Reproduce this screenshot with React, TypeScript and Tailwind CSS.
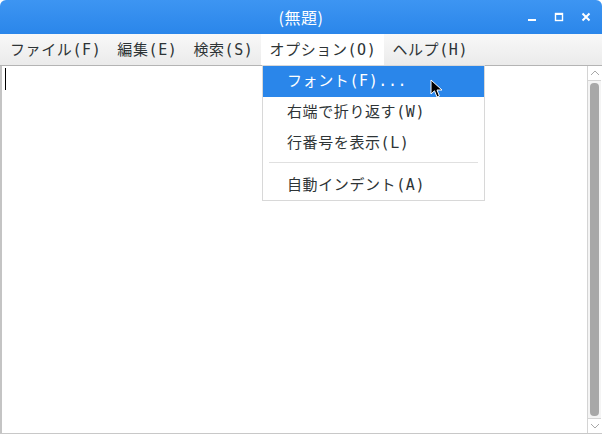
import React from 'react';

const font = { fontFamily: '"DejaVu Sans Mono", "Noto Sans CJK JP", monospace' };

const menus = ['ファイル(F)', '編集(E)', '検索(S)', 'オプション(O)', 'ヘルプ(H)'];

const Cursor = () => (
    <svg width="14" height="20" viewBox="0 0 14 20" className="absolute left-[430px] top-[79px]">
        <path d="M1 1 L1 15 L4.5 11.8 L7 18 L9.4 17 L7 11 L12 11 Z" fill="#000" stroke="#fff" strokeWidth="1" strokeLinejoin="round" />
    </svg>
);

export default function App() {
    return (
        <div className="relative w-[602px] h-[434px] flex flex-col bg-white overflow-hidden text-[15px] tracking-[0.6px] text-[#2e3436]" style={font}>
            {/* title bar */}
            <div className="h-[34px] shrink-0 rounded-t-[6px] bg-gradient-to-b from-[#3d95f2] to-[#2a86ea] flex items-center justify-center relative">
                <span className="text-white text-[16px] tracking-[0.5px]" style={{ fontFamily: '"Noto Sans CJK JP", sans-serif' }}>(無題)</span>
                <div className="absolute right-[10px] top-0 h-full flex items-center gap-[15px]">
                    <svg width="12" height="12" viewBox="0 0 12 12"><rect x="2" y="8" width="8" height="2" fill="#fff" /></svg>
                    <svg width="12" height="12" viewBox="0 0 12 12"><rect x="2.5" y="2.5" width="7" height="7" fill="none" stroke="#fff" strokeWidth="1.4" /><rect x="2" y="2" width="8" height="2" fill="#fff" /></svg>
                    <svg width="12" height="12" viewBox="0 0 12 12"><path d="M2.5 2.5 L9.5 9.5 M9.5 2.5 L2.5 9.5" stroke="#fff" strokeWidth="2" /></svg>
                </div>
            </div>

            {/* menu bar */}
            <div className="h-[31px] shrink-0 flex items-stretch pl-[2px] bg-gradient-to-b from-[#f8f8f8] to-[#ebebeb]">
                {menus.map((m, i) => (
                    <div key={m} className={`px-[8px] pt-[2px] flex items-center ${i === 3 ? 'bg-white' : ''}`}>{m}</div>
                ))}
            </div>

            {/* editor */}
            <div className="flex-1 flex border-t border-[#b4b4b4] border-b border-b-[#c8c8c8]">
                <div className="flex-1 border-l-[2px] border-[#c4c4c4] relative">
                    <div className="absolute left-[3px] top-[2px] w-[1px] h-[22px] bg-black" />
                </div>
                <div className="w-[14px] mr-[1px] flex flex-col border-l border-[#d4d4d4] bg-[#f4f4f4]">
                    <div className="h-[15px] flex items-center justify-center border-b border-[#d4d4d4] bg-white">
                        <svg width="10" height="6" viewBox="0 0 10 6"><path d="M1 5 L5 1 L9 5" fill="none" stroke="#a8a8a8" /></svg>
                    </div>
                    <div className="flex-1 px-[2px] py-[2px]">
                        <div className="h-full rounded-[4px] bg-[#a8a8a8]" />
                    </div>
                    <div className="h-[15px] flex items-center justify-center border-t border-[#d4d4d4] bg-white">
                        <svg width="10" height="6" viewBox="0 0 10 6"><path d="M1 1 L5 5 L9 1" fill="none" stroke="#a8a8a8" /></svg>
                    </div>
                </div>
            </div>

            {/* dropdown */}
            <div className="absolute left-[262px] top-[65px] w-[223px] bg-white border border-[#d8d8d8] flex flex-col">
                <div className="h-[31px] flex items-center pl-[24px] bg-[#2a86ea] text-white">フォント(F)...</div>
                <div className="h-[31px] flex items-center pl-[24px]">右端で折り返す(W)</div>
                <div className="h-[31px] flex items-center pl-[24px]">行番号を表示(L)</div>
                <div className="h-[11px] pt-[3px] px-[6px]"><div className="w-full h-[1px] bg-[#e0e0e0]" /></div>
                <div className="h-[30px] pt-[1px] flex items-center pl-[24px]">自動インデント(A)</div>
            </div>

            <Cursor />
        </div>
    );
}
